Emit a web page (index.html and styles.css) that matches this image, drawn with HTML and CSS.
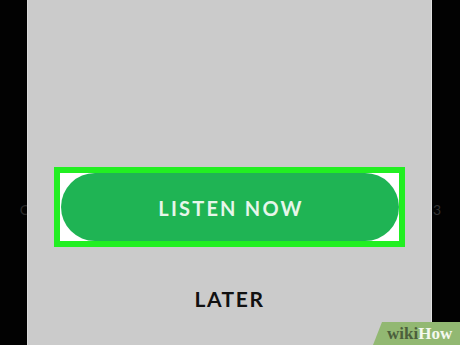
FILE: index.html
```html
<!DOCTYPE html>
<html>
<head>
<meta charset="utf-8">
<link rel="stylesheet" href="styles.css">
</head>
<body>
<div class="frame">
  <div class="side side-left"><span class="ghost">C</span></div>
  <main class="panel">
    <div class="highlight">
      <button class="listen">LISTEN NOW</button>
    </div>
    <div class="later">LATER</div>
  </main>
  <div class="side side-right"><span class="ghost">3</span></div>
</div>
<div class="watermark"><span class="wiki">wiki</span><span class="how">How</span></div>
</body>
</html>
```
FILE: styles.css
```css
html, body {
  margin: 0;
  padding: 0;
  width: 460px;
  height: 345px;
  overflow: hidden;
  background: #000;
}
.frame {
  display: grid;
  grid-template-columns: 27px 405px 28px;
  height: 345px;
}
.side {
  background: #020202;
  display: flex;
  padding-top: 202px;
  box-sizing: border-box;
}
.side-left { justify-content: flex-end; }
.side-right { justify-content: flex-start; }
.ghost {
  font-family: "Lato", sans-serif;
  font-size: 14px;
  line-height: 16px;
  color: #2a2a2a;
}
.side-left .ghost { margin-right: -2px; }
.side-right .ghost { margin-left: 1px; color: #333; }
.panel {
  background: #cbcbcb;
  border-left: 1px solid #d8d8d8;
  border-right: 1px solid #e0e0e0;
  box-sizing: border-box;
  display: flex;
  flex-direction: column;
  align-items: center;
  padding-top: 167px;
}
.highlight {
  width: 351px;
  height: 80px;
  box-sizing: border-box;
  border: 6px solid #22ef22;
  background: #fff;
  padding: 0 0 0 1px;
  display: flex;
}
.listen {
  flex: 1;
  border: none;
  margin: 0;
  padding: 0;
  border-radius: 34px;
  background: #1fb454;
  color: #e6f6ea;
  font-family: "Lato", sans-serif;
  font-weight: 700;
  font-size: 20px;
  letter-spacing: 2.2px;
  display: flex;
  align-items: center;
  justify-content: center;
  padding-left: 2px;
  padding-top: 1px;
}
.later {
  margin-top: 39px;
  font-family: "Lato", sans-serif;
  font-weight: 700;
  font-size: 21px;
  line-height: 26px;
  letter-spacing: 1.6px;
  color: #111;
}
.watermark {
  position: absolute;
  left: 373px;
  top: 322px;
  width: 87px;
  height: 23px;
  background: #92b872;
  clip-path: polygon(9px 0, 100% 0, 100% 100%, 0 100%);
  font-family: "Liberation Serif", serif;
  font-weight: 700;
  font-size: 17px;
  line-height: 23px;
  padding-left: 14px;
  box-sizing: border-box;
  white-space: nowrap;
}
.wiki { color: #4b5f3c; }
.how { color: #f4f8ef; }
```
